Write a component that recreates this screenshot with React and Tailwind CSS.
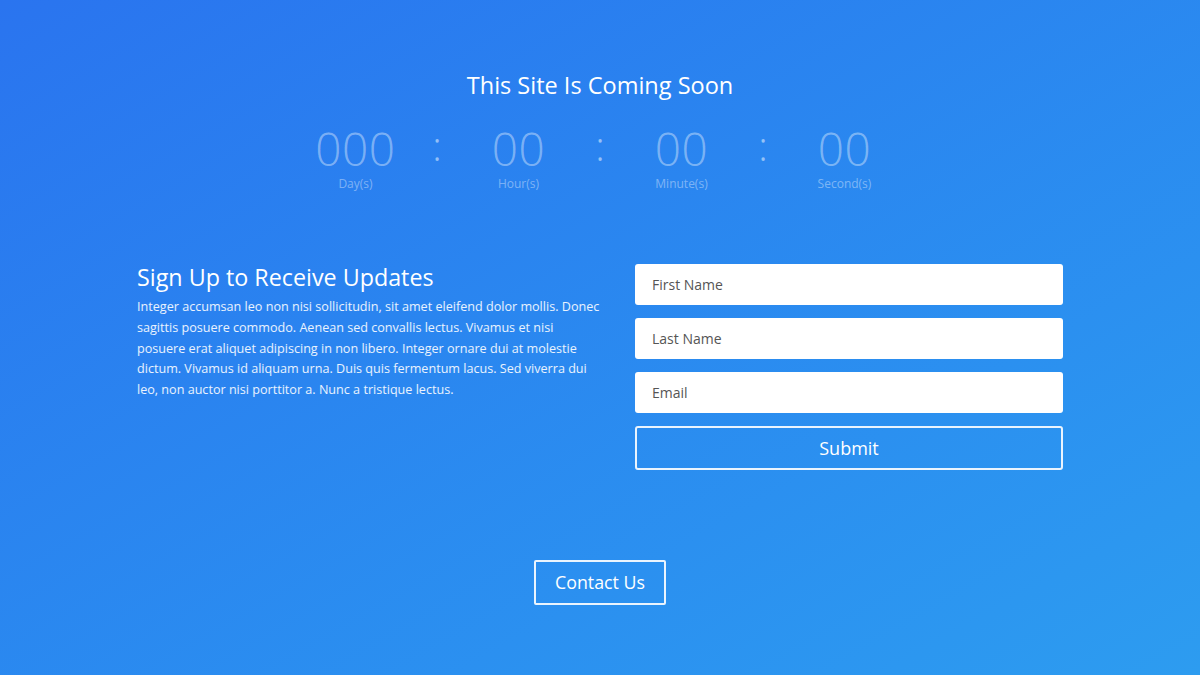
import React from "react"

const units = [
    { value: "000", label: "Day(s)" },
    { value: "00", label: "Hour(s)" },
    { value: "00", label: "Minute(s)" },
    { value: "00", label: "Second(s)" },
]

// Countdown row: four units with colons between them
const Countdown = () => (
    <div className="flex items-start justify-center mt-[24px]">
        {units.map((u, i) => (
            <React.Fragment key={u.label}>
                {i > 0 && (
                    <div className="w-[35px] text-center text-[40px] leading-[46px] font-light text-white/50 -mt-[2px]">:</div>
                )}
                <div className="w-[128px] flex flex-col items-center">
                    <div className="text-[46px] leading-[46px] font-light text-white/40 tracking-[0.5px]">{u.value}</div>
                    <div className="text-[12px] leading-[14px] text-white/40 mt-[6px]">{u.label}</div>
                </div>
            </React.Fragment>
        ))}
    </div>
)

const Field = ({ placeholder }) => (
    <input
        type="text"
        placeholder={placeholder}
        className="w-full h-[41px] bg-white rounded-[3px] px-[17px] text-[14px] text-gray-700 placeholder:text-[#555] outline-none"
    />
)

const App = () => {
    return (
        <div
            className="w-[1200px] h-[675px] overflow-hidden bg-gradient-to-br from-[#2a74ef] to-[#2d9cf0] text-white flex flex-col items-center"
            style={{ fontFamily: '"Open Sans", "Noto Sans", sans-serif' }}
        >
            <h1 className="mt-[69px] text-[23.5px] leading-[32px] font-normal">This Site Is Coming Soon</h1>
            <Countdown />

            <div className="w-[926px] flex justify-between mt-[75px]">
                <div className="w-[466px] -mt-[4px]">
                    <h2 className="text-[23.3px] leading-[30px] font-normal">Sign Up to Receive Updates</h2>
                    <p className="mt-[5px] text-[12.6px] leading-[20.75px] text-white/90">
                        Integer accumsan leo non nisi sollicitudin, sit amet eleifend dolor mollis. Donec sagittis posuere commodo. Aenean sed convallis lectus. Vivamus et nisi posuere erat aliquet adipiscing in non libero. Integer ornare dui at molestie dictum. Vivamus id aliquam urna. Duis quis fermentum lacus. Sed viverra dui leo, non auctor nisi porttitor a. Nunc a tristique lectus.
                    </p>
                </div>
                <form className="w-[428px] flex flex-col gap-[13px] -mt-[2px]" onSubmit={(e) => e.preventDefault()}>
                    <Field placeholder="First Name" />
                    <Field placeholder="Last Name" />
                    <Field placeholder="Email" />
                    <button
                        type="submit"
                        className="h-[44px] border-2 border-white/90 rounded-[3px] text-[18px] text-white"
                    >
                        Submit
                    </button>
                </form>
            </div>

            <button className="mt-[90px] w-[132px] h-[45px] border-2 border-white/90 rounded-[2px] text-[17.8px] text-white">
                Contact Us
            </button>
        </div>
    )
}

export default App
